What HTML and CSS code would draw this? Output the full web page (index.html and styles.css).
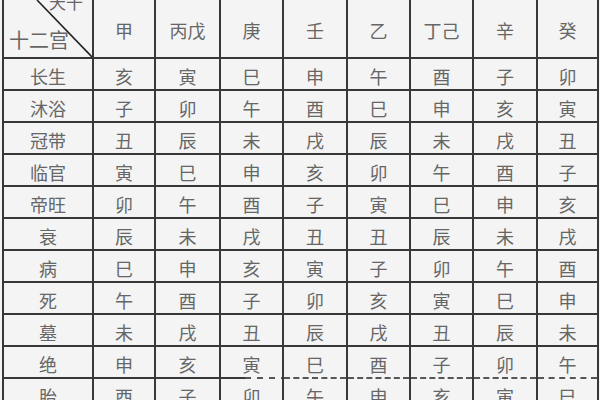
FILE: index.html
```html
<!DOCTYPE html>
<html lang="zh">
<head>
<meta charset="utf-8">
<link rel="stylesheet" href="styles.css">
</head>
<body>
<div class="table">
  <div class="cell corner">
    <svg class="diag" width="88" height="57" viewBox="0 0 88 57"><line x1="33" y1="0" x2="88" y2="57" stroke="#222" stroke-width="1.6"/></svg>
    <span class="lab-top">天干</span>
    <span class="lab-bot">十二宫</span>
  </div>
  <div class="cell head">甲</div><div class="cell head">丙戊</div><div class="cell head">庚</div><div class="cell head">壬</div><div class="cell head">乙</div><div class="cell head">丁己</div><div class="cell head">辛</div><div class="cell head">癸</div>

  <div class="cell">长生</div><div class="cell">亥</div><div class="cell">寅</div><div class="cell">巳</div><div class="cell">申</div><div class="cell">午</div><div class="cell">酉</div><div class="cell">子</div><div class="cell">卯</div>
  <div class="cell">沐浴</div><div class="cell">子</div><div class="cell">卯</div><div class="cell">午</div><div class="cell">酉</div><div class="cell">巳</div><div class="cell">申</div><div class="cell">亥</div><div class="cell">寅</div>
  <div class="cell">冠带</div><div class="cell">丑</div><div class="cell">辰</div><div class="cell">未</div><div class="cell">戌</div><div class="cell">辰</div><div class="cell">未</div><div class="cell">戌</div><div class="cell">丑</div>
  <div class="cell">临官</div><div class="cell">寅</div><div class="cell">巳</div><div class="cell">申</div><div class="cell">亥</div><div class="cell">卯</div><div class="cell">午</div><div class="cell">酉</div><div class="cell">子</div>
  <div class="cell">帝旺</div><div class="cell">卯</div><div class="cell">午</div><div class="cell">酉</div><div class="cell">子</div><div class="cell">寅</div><div class="cell">巳</div><div class="cell">申</div><div class="cell">亥</div>
  <div class="cell">衰</div><div class="cell">辰</div><div class="cell">未</div><div class="cell">戌</div><div class="cell">丑</div><div class="cell">丑</div><div class="cell">辰</div><div class="cell">未</div><div class="cell">戌</div>
  <div class="cell">病</div><div class="cell">巳</div><div class="cell">申</div><div class="cell">亥</div><div class="cell">寅</div><div class="cell">子</div><div class="cell">卯</div><div class="cell">午</div><div class="cell">酉</div>
  <div class="cell">死</div><div class="cell">午</div><div class="cell">酉</div><div class="cell">子</div><div class="cell">卯</div><div class="cell">亥</div><div class="cell">寅</div><div class="cell">巳</div><div class="cell">申</div>
  <div class="cell">墓</div><div class="cell">未</div><div class="cell">戌</div><div class="cell">丑</div><div class="cell">辰</div><div class="cell">戌</div><div class="cell">丑</div><div class="cell">辰</div><div class="cell">未</div>
  <div class="cell">绝</div><div class="cell">申</div><div class="cell">亥</div><div class="cell">寅</div><div class="cell">巳</div><div class="cell">酉</div><div class="cell">子</div><div class="cell">卯</div><div class="cell">午</div>
  <div class="cell">胎</div><div class="cell">酉</div><div class="cell">子</div><div class="cell half">卯</div><div class="cell dash">午</div><div class="cell dash">申</div><div class="cell dash">亥</div><div class="cell dash">寅</div><div class="cell dash">巳</div>
</div>
</body>
</html>
```
FILE: styles.css
```css
html, body {
  margin: 0;
  padding: 0;
  width: 600px;
  height: 400px;
  overflow: hidden;
  background: #f3f3f3;
}
.table {
  margin-left: 2px;
  width: 597px;
  box-sizing: border-box;
  display: grid;
  grid-template-columns: 88px 60px 63px 61px 62px 61px 61px 62px 59px;
  grid-template-rows: 57px repeat(11, 30px);
  gap: 2px;
  padding: 0 2px;
  background: #383838;
  font-family: "Noto Sans CJK SC", "Noto Sans CJK TC", sans-serif;
  font-size: 18px;
  color: #666;
}
.cell {
  background: #f4f4f4;
  display: flex;
  align-items: center;
  justify-content: center;
  padding-top: 3px;
  box-sizing: border-box;
  line-height: 1;
  white-space: nowrap;
}
.head {
  padding-top: 2px;
}
.corner {
  position: relative;
  overflow: visible;
}
.diag {
  position: absolute;
  left: 0;
  top: 0;
}
.lab-top {
  position: absolute;
  left: 45px;
  top: -7px;
  font-size: 17px;
}
.lab-bot {
  position: absolute;
  left: 5px;
  top: 30px;
  font-size: 20px;
}
.dash {
  margin-top: -2px;
  border-top: 2px dashed #555;
  padding-top: 3px;
}
.half {
  margin-top: -2px;
  padding-top: 5px;
  background:
    linear-gradient(#383838, #383838) left top / 24px 2px no-repeat,
    repeating-linear-gradient(90deg, #555 0 6px, transparent 6px 12px) left top / 100% 2px no-repeat,
    #f4f4f4;
}
```
